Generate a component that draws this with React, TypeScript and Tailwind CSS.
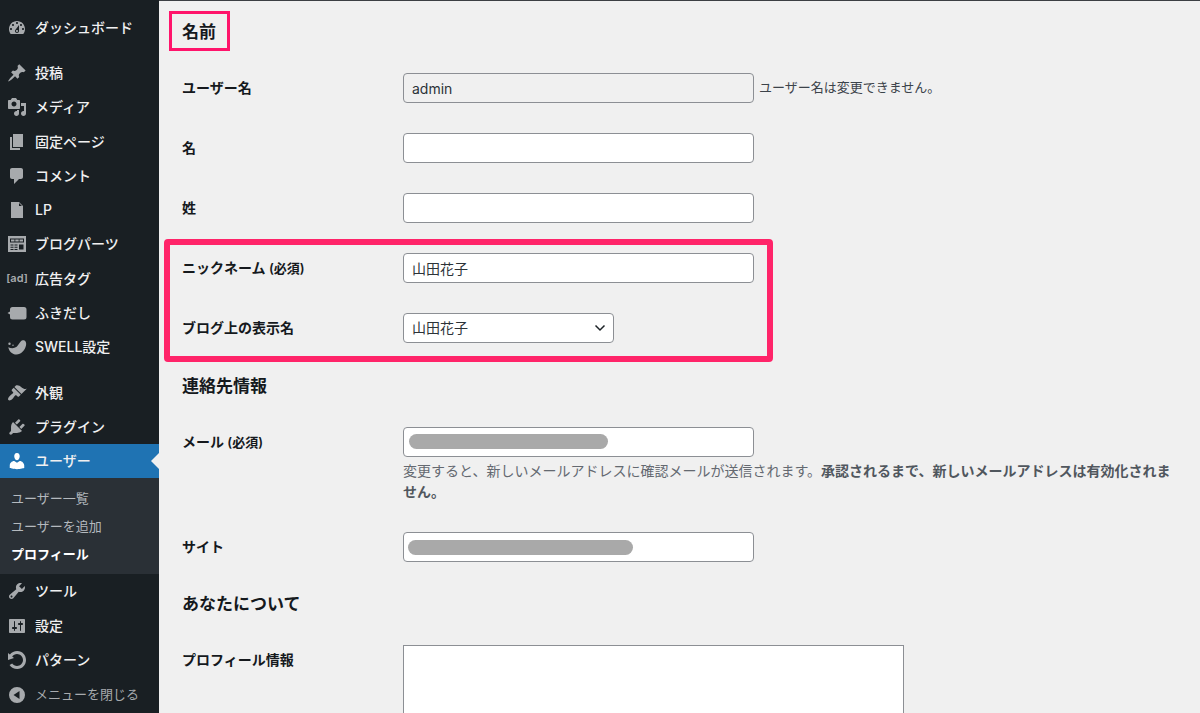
import type { ReactNode } from "react";

const icons: Record<string, string> = {
  dashboard:
    "M3.76 16h12.48c1.1-1.37 1.76-3.11 1.76-5 0-4.42-3.58-8-8-8s-8 3.58-8 8c0 1.89.66 3.63 1.76 5zM10 4c.55 0 1 .45 1 1s-.45 1-1 1-1-.45-1-1 .45-1 1-1zM6 6c.55 0 1 .45 1 1s-.45 1-1 1-1-.45-1-1 .45-1 1-1zm8 0c.55 0 1 .45 1 1s-.45 1-1 1-1-.45-1-1 .45-1 1-1zm-5.37 5.55L12 7v6c0 1.1-.9 2-2 2s-2-.9-2-2c0-.57.24-1.08.63-1.45zM4 10c.55 0 1 .45 1 1s-.45 1-1 1-1-.45-1-1 .45-1 1-1zm12 0c.55 0 1 .45 1 1s-.45 1-1 1-1-.45-1-1 .45-1 1-1zm-5 3c0-.55-.45-1-1-1s-1 .45-1 1 .45 1 1 1 1-.45 1-1z",
  post: "M10.44 3.02l1.82-1.82 6.36 6.35-1.83 1.82c-1.05-.68-2.48-.57-3.41.36l-.75.75c-.92.93-1.04 2.35-.35 3.41l-1.83 1.82-2.41-2.41-2.8 2.79c-.42.42-3.38 2.71-3.8 2.29s1.86-3.39 2.28-3.81l2.79-2.79L4.1 9.36l1.83-1.82c1.05.69 2.48.57 3.4-.36l.75-.75c.93-.92 1.05-2.35.36-3.41z",
  media:
    "M13 11V4c0-.55-.45-1-1-1h-1.67L9 1H5L3.67 3H2c-.55 0-1 .45-1 1v7c0 .55.45 1 1 1h10c.55 0 1-.45 1-1zM7 4.5c1.38 0 2.5 1.12 2.5 2.5S8.38 9.5 7 9.5 4.5 8.38 4.5 7 5.62 4.5 7 4.5zM14 6h5v10.5c0 1.38-1.12 2.5-2.5 2.5S14 17.88 14 16.5s1.12-2.5 2.5-2.5c.17 0 .34.02.5.05V9h-3V6zm-4 8.05V13h2v3.5c0 1.38-1.12 2.5-2.5 2.5S7 17.88 7 16.5 8.12 14 9.5 14c.17 0 .34.02.5.05z",
  page: "M6 15V2h10v13H6zm-1 1h8v2H3V5h2v11z",
  comments:
    "M5 2h9c1.1 0 2 .9 2 2v7c0 1.1-.9 2-2 2h-2l-5 5v-5H5c-1.1 0-2-.9-2-2V4c0-1.1.9-2 2-2z",
  file: "M12 2l4 4v12H4V2h8zm0 4h3l-3-3v3z",
  parts:
    "M1 2h18v16H1zM3 4.500v4h14v-4zM4 5.500h3.500v2H4zM8.300 5.500h3.400v2H8.300zM12.500 5.500H16v2h-3.500zM3.500 10.500v1h3v-1zM7.500 10.500v1h3v-1zM3.500 12.700v1h3v-1zM7.500 12.700v1h3v-1zM3.500 14.900v1h3v-1zM7.500 14.900v1h3v-1zM12 10.500v5h4.500v-5z",
  balloon:
    "M5.500 4h11.500a2.500 2.500 0 0 1 2.500 2.500v7.500a2.500 2.500 0 0 1-2.500 2.500H5.500A2.500 2.500 0 0 1 3 14v-2.400L.5 10 3 8.400V6.500A2.500 2.500 0 0 1 5.500 4z",
  swell:
    "M15.800 3.200c2.600-.4 3.900 2.200 3.200 5.300-1.100 5-5 8.900-9.500 9-4.300 0-7.300-3-8.200-7.300 2.800 1.300 5.800 1.300 8-.2 2.400-1.700 3.600-6.400 6.500-6.800zM2.500 5.500a1.200 1.200 0 1 1 0 2.400 1.200 1.200 0 0 1 0-2.400zM6 7.500a.7.700 0 1 1 0 1.400.7.700 0 0 1 0-1.400z",
  appearance:
    "M14.48 11.06L7.41 3.99l1.5-1.5c.5-.56 2.3-.47 3.51.32 1.21.8 1.43 1.28 2.91 2.1 1.18.64 2.45 1.26 4.45.85zm-.71.71L6.7 4.7 4.93 6.47c-.39.39-.39 1.02 0 1.41l1.06 1.06c.39.39.39 1.03 0 1.42-.6.6-1.43 1.11-2.21 1.69-.35.26-.7.53-1.01.84C1.43 14.23.4 16.08 1.4 17.07c.99 1 2.84-.03 4.18-1.36.31-.31.58-.66.85-1.02.57-.78 1.08-1.61 1.69-2.21.39-.39 1.02-.39 1.41 0l1.06 1.06c.39.39 1.02.39 1.41 0z",
  plugins:
    "M13.11 4.36L9.87 7.6 8 5.73l3.24-3.24c.35-.34 1.05-.2 1.56.32.52.51.66 1.21.31 1.55zm-8 1.77l.91-1.12 9.01 9.01-1.19.84c-.71.71-2.63 1.16-3.82 1.16H6.14L4.9 17.26c-.59.59-1.54.59-2.12 0-.59-.58-.59-1.53 0-2.12l1.24-1.24v-3.88c0-1.13.4-3.19 1.09-3.89zm7.26 3.97l3.24-3.24c.34-.35 1.04-.21 1.55.31.52.51.66 1.21.31 1.55l-3.24 3.25z",
  users:
    "M10 9.25c-2.27 0-2.73-3.44-2.73-3.44C7 4.02 7.82 2 9.97 2c2.16 0 2.98 2.02 2.71 3.81 0 0-.41 3.44-2.68 3.44zm0 2.57L12.72 10c2.39 0 4.52 2.33 4.52 4.53v2.49s-3.65 1.13-7.24 1.13c-3.65 0-7.24-1.13-7.24-1.13v-2.49c0-2.25 1.94-4.48 4.47-4.48z",
  tools:
    "M16.68 9.77c-1.34 1.34-3.3 1.67-4.95.99l-5.41 6.52c-.99.99-2.59.99-3.58 0s-.99-2.59 0-3.57l6.52-5.42c-.68-1.65-.35-3.61.99-4.95 1.28-1.28 3.12-1.62 4.72-1.06l-2.89 2.89 2.82 2.82 2.86-2.87c.53 1.58.18 3.39-1.08 4.65zM3.81 16.21c.4.39 1.04.39 1.43 0 .4-.4.4-1.04 0-1.43-.39-.4-1.03-.4-1.43 0-.39.39-.39 1.03 0 1.43z",
  settings:
    "M18 16V4c0-.55-.45-1-1-1H3c-.55 0-1 .45-1 1v12c0 .55.45 1 1 1h14c.55 0 1-.45 1-1zM8 11h1c.55 0 1 .45 1 1s-.45 1-1 1H8v1.5c0 .28-.22.5-.5.5s-.5-.22-.5-.5V13H6c-.55 0-1-.45-1-1s.45-1 1-1h1V5.500c0-.28.22-.5.5-.5s.5.22.5.5V11zm5-2h-1c-.55 0-1-.45-1-1s.45-1 1-1h1V5.500c0-.28.22-.5.5-.5s.5.22.5.5V7h1c.55 0 1 .45 1 1s-.45 1-1 1h-1v5.500c0 .28-.22.5-.5.5s-.5-.22-.5-.5V9z",
  rotate:
    "M10.25 1.02c5.1 0 8.75 4.04 8.75 9s-3.65 9-8.75 9c-3.2 0-6.02-1.59-7.68-3.99l2.59-1.52c1.1 1.5 2.86 2.51 4.84 2.51 3.3 0 6-2.79 6-6s-2.7-6-6-6c-1.97 0-3.72 1-4.82 2.49L7 8.02l-6 2v-7L2.89 4.6c1.69-2.17 4.36-3.58 7.36-3.58z",
  collapse: "M10 2a8 8 0 1 1 0 16 8 8 0 0 1 0-16zM12.500 6L6.500 10l6 4z",
};

function Icon({ name }: { name: string }) {
  if (name === "ad") {
    return (
      <span className="flex w-5 shrink-0 justify-center text-[11px] font-semibold text-[#a7aaad]" aria-hidden="true">
        [ad]
      </span>
    );
  }
  return (
    <svg viewBox="0 0 20 20" className="size-5 shrink-0" fill="currentColor" fillRule="evenodd" aria-hidden="true">
      <path d={icons[name]} />
    </svg>
  );
}

function MenuItem({ icon, label, active = false }: { icon: string; label: string; active?: boolean }) {
  return (
    <li>
      <a
        href="#"
        className={
          active
            ? "relative flex h-[34px] items-center gap-2 bg-[#1f73b3] pl-[7px] text-white"
            : "flex h-[34px] items-center gap-2 pl-[7px] text-[#a7aaad]"
        }
      >
        <Icon name={icon} />
        <span className="text-sm font-medium whitespace-nowrap text-[#f0f0f1]">{label}</span>
        {active && (
          <span className="absolute top-[9px] right-0 border-y-8 border-r-8 border-y-transparent border-r-[#f0f0f0]" />
        )}
      </a>
    </li>
  );
}

const contentItems = [
  ["post", "投稿"],
  ["media", "メディア"],
  ["page", "固定ページ"],
  ["comments", "コメント"],
  ["file", "LP"],
  ["parts", "ブログパーツ"],
  ["ad", "広告タグ"],
  ["balloon", "ふきだし"],
  ["swell", "SWELL設定"],
];

function Sidebar() {
  return (
    <nav className="w-[159px] shrink-0 bg-[#191f23] pt-[11px]" aria-label="メインメニュー">
      <ul>
        <MenuItem icon="dashboard" label="ダッシュボード" />
      </ul>
      <ul className="mt-[11px] flex h-[308px] flex-col justify-between">
        {contentItems.map(([icon, label]) => (
          <MenuItem key={label} icon={icon} label={label} />
        ))}
      </ul>
      <ul className="mt-3">
        <MenuItem icon="appearance" label="外観" />
        <MenuItem icon="plugins" label="プラグイン" />
        <MenuItem icon="users" label="ユーザー" active />
      </ul>
      <ul className="bg-[#2a3036] py-[6px] text-[13px] leading-7 text-[#b4b9be]">
        <li className="pl-[11px]">
          <a href="#">ユーザー一覧</a>
        </li>
        <li className="pl-[11px]">
          <a href="#">ユーザーを追加</a>
        </li>
        <li className="pl-[11px] font-semibold text-white">
          <a href="#">プロフィール</a>
        </li>
      </ul>
      <ul className="flex h-[138px] flex-col justify-between">
        <MenuItem icon="tools" label="ツール" />
        <MenuItem icon="settings" label="設定" />
        <MenuItem icon="rotate" label="パターン" />
        <li>
          <button type="button" className="flex h-[34px] items-center gap-2 pl-[7px] text-[#a7aaad]">
            <Icon name="collapse" />
            <span className="text-[13px] whitespace-nowrap">メニューを閉じる</span>
          </button>
        </li>
      </ul>
    </nav>
  );
}

function Heading({ children }: { children: ReactNode }) {
  return <h2 className="text-[17px] leading-6 font-semibold text-[#15191d]">{children}</h2>;
}

function Row({ id, label, note, children }: { id: string; label: string; note?: string; children: ReactNode }) {
  return (
    <div className="flex py-[15px]">
      <label htmlFor={id} className="w-[221px] shrink-0 text-sm leading-[30px] font-semibold text-[#15191d]">
        {label}
        {note && <span className="text-[13px]"> {note}</span>}
      </label>
      <div className="min-w-0 flex-1">{children}</div>
    </div>
  );
}

const field =
  "block h-[30px] w-[351px] rounded border border-[#8c8f94] bg-white px-2 text-sm text-[#2c3338] outline-none";

export default function App() {
  return (
    <div className="flex h-screen overflow-hidden bg-[#f0f0f0] font-['Inter','Noto_Sans_CJK_JP',sans-serif]">
      <Sidebar />
      <main className="min-w-0 flex-1 border-t border-[#3c3f43] pt-[19px] pr-5 pl-[23px]">
        <form>
          <div className="relative w-fit">
            <Heading>名前</Heading>
            <span className="pointer-events-none absolute -top-[9px] -right-[14px] -bottom-[7px] -left-[13px] border-3 border-[#ff146b]" />
          </div>
          <section className="mt-[14px]">
            <Row id="username" label="ユーザー名">
              <div className="flex items-center gap-[5px]">
                <input
                  id="username"
                  readOnly
                  value="admin"
                  className="block h-[30px] w-[351px] rounded border border-[#8c8f94] bg-[#f0f0f0] px-2 text-sm text-[#2c3338] outline-none"
                />
                <span className="text-[13px] text-[#3c434a]">ユーザー名は変更できません。</span>
              </div>
            </Row>
            <Row id="first" label="名">
              <input id="first" className={field} />
            </Row>
            <Row id="last" label="姓">
              <input id="last" className={field} />
            </Row>
            <div className="relative">
              <Row id="nickname" label="ニックネーム" note="(必須)">
                <input id="nickname" defaultValue="山田花子" className={field} />
              </Row>
              <Row id="display" label="ブログ上の表示名">
                <div className="relative w-[211px]">
                  <select
                    id="display"
                    className="block h-[30px] w-full appearance-none rounded border border-[#8c8f94] bg-white px-2 text-sm text-[#2c3338] outline-none"
                  >
                    <option>山田花子</option>
                  </select>
                  <svg
                    viewBox="0 0 12 8"
                    className="pointer-events-none absolute top-[11px] right-[8px] h-2 w-3"
                    fill="none"
                    stroke="#1d2327"
                    strokeWidth="1.500"
                    aria-hidden="true"
                  >
                    <path d="M1.500 1.500l4.500 4.500 4.500-4.500" />
                  </svg>
                </div>
              </Row>
              <span className="pointer-events-none absolute top-px -bottom-1 -left-[18px] w-[609px] rounded border-6 border-[#ff2469]" />
            </div>
          </section>

          <div className="mt-4">
            <Heading>連絡先情報</Heading>
          </div>
          <section className="mt-[14px]">
            <Row id="email" label="メール" note="(必須)">
              <div className="relative">
                <input id="email" type="email" className={field} />
                <span className="pointer-events-none absolute top-[7px] left-[6px] h-[15px] w-[199px] rounded-full bg-[#a9a9a9]" />
              </div>
              <p className="mt-[3px] text-sm leading-[21px] break-all text-[#646970]">
                変更すると、新しいメールアドレスに確認メールが送信されます。
                <strong className="font-semibold text-[#50575e]">
                  承認されるまで、新しいメールアドレスは有効化されません。
                </strong>
              </p>
            </Row>
            <Row id="site" label="サイト">
              <div className="relative">
                <input id="site" type="url" className={field} />
                <span className="pointer-events-none absolute top-2 left-[5px] h-[15px] w-[225px] rounded-full bg-[#a9a9a9]" />
              </div>
            </Row>
          </section>

          <div className="mt-[15px]">
            <Heading>あなたについて</Heading>
          </div>
          <section className="mt-[14px]">
            <Row id="bio" label="プロフィール情報">
              <textarea
                id="bio"
                rows={5}
                className="block w-[501px] resize-none border border-[#8c8f94] bg-white px-2 py-1 text-sm outline-none"
              />
            </Row>
          </section>
        </form>
      </main>
    </div>
  );
}
